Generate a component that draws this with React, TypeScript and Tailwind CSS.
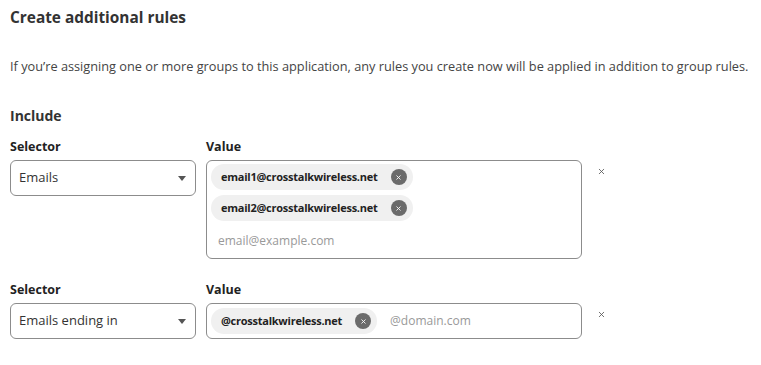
import { X } from 'lucide-react';

type Rule = {
  selector: string;
  values: string[];
  placeholder: string;
  inline: boolean;
};

const RULES: Rule[] = [
  {
    selector: 'Emails',
    values: ['email1@crosstalkwireless.net', 'email2@crosstalkwireless.net'],
    placeholder: 'email@example.com',
    inline: false,
  },
  {
    selector: 'Emails ending in',
    values: ['@crosstalkwireless.net'],
    placeholder: '@domain.com',
    inline: true,
  },
];

function Chip({ label }: { label: string }) {
  return (
    <span className="flex h-[26px] w-fit items-center gap-[13px] rounded-full bg-[#f0f0f0] pr-[6px] pl-[10px] text-[11px] font-bold tracking-[-0.25px] text-[#222]">
      {label}
      <span className="flex h-[16px] w-[16px] items-center justify-center rounded-full bg-[#6b6b6b] text-white">
        <X size={7} strokeWidth={3} />
      </span>
    </span>
  );
}

function RuleRow({ rule }: { rule: Rule }) {
  return (
    <div className="flex items-start">
      <div className="w-[186px]">
        <div className="text-[12.5px] leading-[18px] font-bold text-[#222]">Selector</div>
        <div className="mt-[4px] flex h-[36px] items-center justify-between rounded-[6px] border border-[#8c8c8c] pr-[9px] pl-[8px] text-[13px] text-[#333]">
          {rule.selector}
          <span className="h-0 w-0 border-t-[5px] border-r-[4px] border-l-[4px] border-t-[#555] border-r-transparent border-l-transparent" />
        </div>
      </div>

      <div className="ml-[10px] w-[376px]">
        <div className="text-[12.5px] leading-[18px] font-bold text-[#222]">Value</div>
        {rule.inline ? (
          <div className="mt-[4px] flex h-[36px] items-center gap-[13px] rounded-[6px] border border-[#8c8c8c] px-[4px]">
            {rule.values.map((v) => (
              <Chip key={v} label={v} />
            ))}
            <span className="text-[12px] text-[#999]">{rule.placeholder}</span>
          </div>
        ) : (
          <div className="mt-[4px] flex h-[99px] flex-col gap-[5px] rounded-[6px] border border-[#8c8c8c] px-[4px] pt-[3px]">
            {rule.values.map((v) => (
              <Chip key={v} label={v} />
            ))}
            <span className="mt-[6px] pl-[7px] text-[12px] text-[#999]">{rule.placeholder}</span>
          </div>
        )}
      </div>

      <button type="button" className="mt-[29px] ml-[15px] text-[#555]">
        <X size={9} strokeWidth={2.2} />
      </button>
    </div>
  );
}

export default function App() {
  return (
    <div className="h-[365px] w-[761px] bg-white px-[10px] font-['Open_Sans',sans-serif] text-[#333]">
      <h2 className="pt-[7px] text-[15.4px] leading-[22px] font-bold text-[#333]">Create additional rules</h2>
      <p className="mt-[28px] text-[12.75px] leading-[18px] text-[#444]">
        If you’re assigning one or more groups to this application, any rules you create now will be applied in addition to group rules.
      </p>
      <h3 className="mt-[31px] text-[14px] leading-[20px] font-bold text-[#333]">Include</h3>
      <div className="mt-[12px] flex flex-col gap-[22px]">
        {RULES.map((rule) => (
          <RuleRow key={rule.selector} rule={rule} />
        ))}
      </div>
    </div>
  );
}
